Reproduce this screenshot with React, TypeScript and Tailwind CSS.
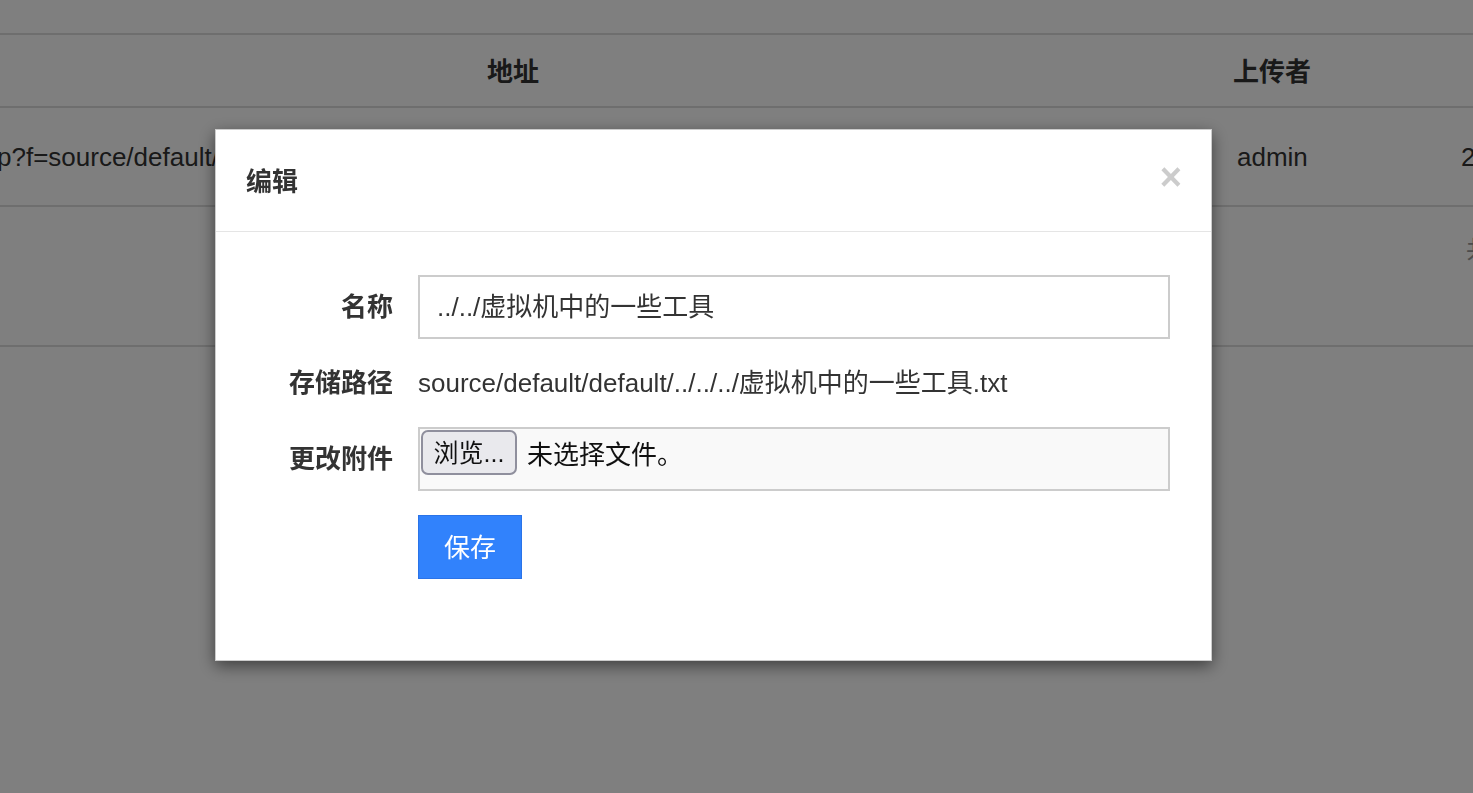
import React from "react";

const font = { fontFamily: '"Liberation Sans", "Noto Sans CJK SC", sans-serif' };

export default function App() {
  return (
    <div className="relative h-[793px] w-[1473px] overflow-hidden bg-white text-[#333] text-[26px]" style={font}>
      {/* page table */}
      <div className="pt-[33px]">
        <div className="border-t-2 border-[#dddddd]">
          <div className="grid h-[73px] grid-cols-[1209px_228px_1fr] items-center border-b-2 border-[#dddddd] pt-[3px] font-bold">
            <div className="pl-[487px]">地址</div>
            <div className="pl-6">上传者</div>
            <div></div>
          </div>
          <div className="grid h-[99px] grid-cols-[1209px_228px_1fr] items-center border-b-2 border-[#dddddd] pt-[2px]">
            <div className="overflow-hidden whitespace-nowrap">
              <div className="-ml-[3px]">p?f=source/default/default/../../../虚拟机中的一些工具.txt</div>
            </div>
            <div className="pl-[28px]">admin</div>
            <div className="overflow-hidden whitespace-nowrap pl-6">2025</div>
          </div>
          <div className="flex h-[140px] items-center border-b-2 border-[#dddddd] pb-[52px]">
            <div className="overflow-hidden whitespace-nowrap pl-[1466px] text-[24px] text-[#999]">共 1 条</div>
          </div>
        </div>
      </div>

      {/* backdrop */}
      <div className="fixed inset-0 bg-black/50"></div>

      {/* modal */}
      <div className="fixed left-[215px] top-[129px] w-[997px] border border-black/20 bg-white shadow-[0_5px_15px_rgba(0,0,0,0.5)]">
        <div className="flex h-[102px] items-center justify-between border-b border-[#e5e5e5] pl-[30px] pr-[29px]">
          <div className="pt-[3px] text-[26px] font-bold text-[#333]">编辑</div>
          <div className="pb-[8px] text-[38px] font-bold leading-none text-[#cccccc]">×</div>
        </div>
        <div className="flex flex-col gap-[12px] pb-[81px] pt-[43px]">
          <div className="flex items-center gap-[25px]">
            <div className="w-[177px] text-right font-bold">名称</div>
            <div className="flex h-[64px] w-[752px] items-center border-2 border-[#cccccc] pl-[17px]">
              ../../虚拟机中的一些工具
            </div>
          </div>
          <div className="flex h-[64px] items-center gap-[25px]">
            <div className="w-[177px] text-right font-bold">存储路径</div>
            <div className="whitespace-nowrap">source/default/default/../../../虚拟机中的一些工具.txt</div>
          </div>
          <div className="flex items-center gap-[25px]">
            <div className="w-[177px] text-right font-bold">更改附件</div>
            <div className="flex h-[64px] w-[752px] items-start border-2 border-[#cccccc] bg-[#f9f9f9] pl-[1px] pt-[1px]">
              <div className="flex h-[45px] w-[96px] items-center justify-center rounded-[7px] border-2 border-[#8f8f9d] bg-[#e9e9ed] pt-[3px] text-[25px] text-[#111]">
                浏览...
              </div>
              <div className="ml-[10px] flex h-[45px] items-center pt-[6px] text-[#111]">未选择文件。</div>
            </div>
          </div>
          <div className="mt-[12px] flex gap-[25px]">
            <div className="w-[177px]"></div>
            <div className="flex h-[64px] w-[104px] items-center justify-center border border-[#2a73e8] bg-[#3182fc] pt-[3px] text-white">
              保存
            </div>
          </div>
        </div>
      </div>
    </div>
  );
}
